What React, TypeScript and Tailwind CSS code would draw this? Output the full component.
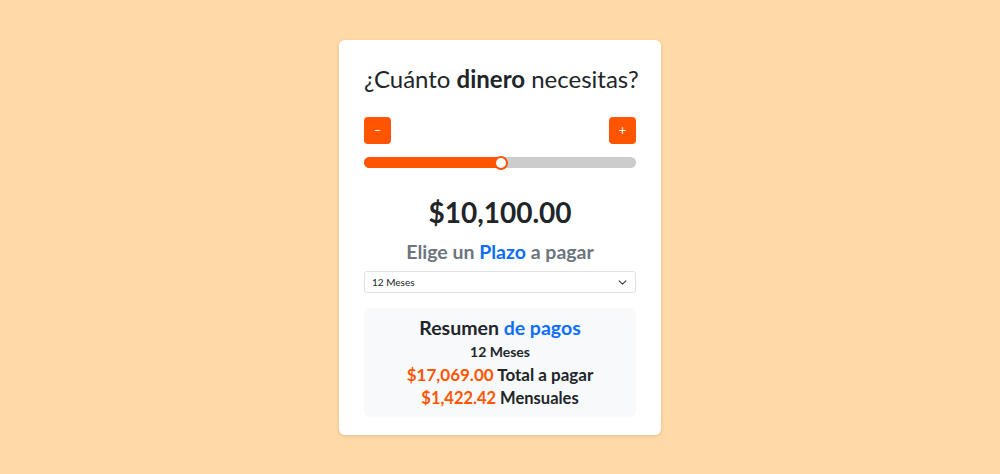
import { useState } from "react";

const fmt = (n: number) =>
  "$" + n.toLocaleString("en-US", { minimumFractionDigits: 2, maximumFractionDigits: 2 });

const App = () => {
  const [amount, setAmount] = useState(10100);
  const min = 0;
  const max = 20000;
  const pct = ((amount - min) / (max - min)) * 100;

  return (
    <div
      className="w-full h-[474px] bg-[#ffd9a6] flex justify-center items-start pt-[40px]"
      style={{ fontFamily: "Lato, 'Open Sans', sans-serif" }}
    >
      <div className="w-[322px] bg-white rounded-md shadow-[0_1px_4px_rgba(0,0,0,0.12)] px-[25px] pt-[24px] pb-[18px] flex flex-col">
        <h1 className="text-[24px] leading-[30px] text-center text-[#212529] whitespace-nowrap">
          ¿Cuánto <span className="font-bold">dinero</span> necesitas?
        </h1>

        <div className="flex justify-between mt-[23px]">
          <button
            onClick={() => setAmount(Math.max(min, amount - 100))}
            className="w-[27px] h-[27px] bg-[#ff5500] rounded-[4px] text-white text-[13px] flex items-center justify-center"
          >
            –
          </button>
          <button
            onClick={() => setAmount(Math.min(max, amount + 100))}
            className="w-[27px] h-[27px] bg-[#ff5500] rounded-[4px] text-white text-[13px] flex items-center justify-center"
          >
            +
          </button>
        </div>

        <div className="relative h-[11px] mt-[13px] rounded-full bg-[#cccccc]">
          <div className="h-full rounded-full bg-[#ff5500]" style={{ width: `${pct}%` }} />
          <div
            className="absolute top-1/2 w-[14px] h-[14px] -translate-x-1/2 -translate-y-1/2 rounded-full bg-white border-2 border-[#ff5500]"
            style={{ left: `${pct}%` }}
          />
        </div>

        <div className="text-center font-bold text-[28px] leading-[34px] text-[#212529] mt-[27px]">
          {fmt(amount)}
        </div>

        <div className="text-center font-bold text-[19.5px] leading-[26px] text-[#6c757d] mt-[10px]">
          Elige un <span className="text-[#0d6efd]">Plazo</span> a pagar
        </div>

        <div className="mt-[6px] h-[22px] border border-[#dee2e6] rounded-[3px] flex items-center justify-between pl-[7px] pr-[8px]">
          <span className="text-[10px] text-[#212529]">12 Meses</span>
          <svg width="9" height="9" viewBox="0 0 16 16" fill="none" stroke="#343a40" strokeWidth="2" strokeLinecap="round" strokeLinejoin="round">
            <path d="M2 5l6 6 6-6" />
          </svg>
        </div>

        <div className="mt-[15px] bg-[#f8f9fa] rounded-md pt-[7px] pb-[7px] flex flex-col items-center text-[#212529] font-bold">
          <div className="text-[19.5px] leading-[26px]">
            Resumen <span className="text-[#0d6efd]">de pagos</span>
          </div>
          <div className="text-[14px] leading-[20px] mt-[1px]">12 Meses</div>
          <div className="text-[17px] leading-[24px] mt-[1px]">
            <span className="text-[#ff5500]">$17,069.00</span> Total a pagar
          </div>
          <div className="text-[16.5px] leading-[23px]">
            <span className="text-[#ff5500]">$1,422.42</span> Mensuales
          </div>
        </div>
      </div>
    </div>
  );
};

export default App;
